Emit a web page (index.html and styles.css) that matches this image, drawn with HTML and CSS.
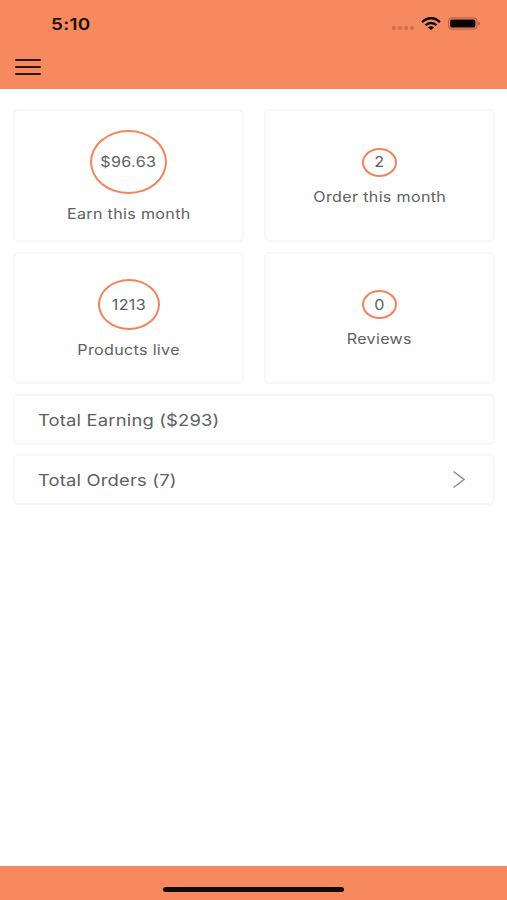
FILE: index.html
```html
<!DOCTYPE html>
<html lang="en">
<head>
<meta charset="utf-8">
<title>Dashboard</title>
<link rel="stylesheet" href="styles.css">
</head>
<body>
<div class="app">
  <header class="header">
    <div class="status">
      <span class="time wide">5:10</span>
      <div class="indicators">
        <span class="signal"><i></i><i></i><i></i><i></i></span>
        <svg class="wifi" width="20" height="14" viewBox="0 0 20 14" fill="none" stroke="#080402" stroke-width="2.3">
          <path d="M1.1 5.2C6-.1 14-.1 18.9 5.2M4.5 8.3c3.1-3.1 7.900-3.100 11 0"/>
          <path d="M10 13 6.900 10.400c1.700-1.600 4.500-1.600 6.200 0z" fill="#080402" stroke="none"/>
        </svg>
        <svg class="battery" width="33" height="13" viewBox="0 0 33 13">
          <rect x=".6" y=".9" width="28.400" height="11.200" rx="3" fill="none" stroke="#a95f42"/>
          <rect x="2.200" y="2.500" width="25.200" height="8" rx="1.500" fill="#080402"/>
          <path d="M30.500 4.500c1.500.5 1.500 3.500 0 4z" fill="#8b4b33"/>
        </svg>
      </div>
    </div>
    <button class="menu" aria-label="Menu"><i></i><i></i><i></i></button>
  </header>
  <main class="content">
    <section class="cards">
      <article class="card">
        <div class="ring ring-large"><span class="wide">$96.63</span></div>
        <span class="wide">Earn this month</span>
      </article>
      <article class="card">
        <div class="ring ring-small"><span class="wide">2</span></div>
        <span class="wide">Order this month</span>
      </article>
      <article class="card">
        <div class="ring ring-medium"><span class="wide">1213</span></div>
        <span class="wide">Products live</span>
      </article>
      <article class="card">
        <div class="ring ring-small"><span class="wide">0</span></div>
        <span class="wide">Reviews</span>
      </article>
    </section>
    <div class="row"><span class="wide row-label">Total Earning ($293)</span></div>
    <div class="row">
      <span class="wide row-label">Total Orders (7)</span>
      <svg width="14" height="19" viewBox="0 0 14 19" fill="none" stroke="#8c8c8c" stroke-width="1.500"><path d="M1.500 1.500 12 9.500 1.500 17.500"/></svg>
    </div>
  </main>
  <footer class="footer"><div class="home"></div></footer>
</div>
</body>
</html>
```
FILE: styles.css
```css
* { box-sizing: border-box; }
body {
  margin: 0;
  background: #fff;
  color: #606060;
  font: 14px/20px Inter, "Liberation Sans", sans-serif;
}
.app { height: 900px; display: flex; flex-direction: column; }
.wide { display: inline-block; white-space: nowrap; letter-spacing: .28px; transform: scaleX(1.15); }

.header { height: 89px; background: #f7895e; }
.status {
  height: 47px;
  padding: 0 26px 0 51px;
  display: flex;
  justify-content: space-between;
  align-items: center;
}
.time { color: #1c0d07; font-size: 16px; font-weight: 600; transform-origin: left; transform: scaleX(1.18); }
.indicators { display: flex; align-items: center; }
.signal { display: flex; gap: 2px; margin: 8px 7px 0 0; }
.signal i { width: 4px; height: 4px; border-radius: 50%; background: #c96e4c; }
.wifi { margin-right: 7px; }
.menu {
  display: flex;
  flex-direction: column;
  gap: 5px;
  margin: 12px 0 0 15px;
  padding: 0;
  border: 0;
  background: none;
}
.menu i { width: 26px; height: 2px; border-radius: 1px; background: #30170e; }

.content { flex: 1; padding: 20px 12px 0 13px; }
.cards { display: grid; grid-template-columns: 231px 231px; justify-content: space-between; gap: 10px; }
.card, .row { border: 2px solid #f7f7f7; border-radius: 5px; background: #fefefe; }
.card {
  height: 132.500px;
  padding-top: 4px;
  display: flex;
  flex-direction: column;
  align-items: center;
  justify-content: center;
  gap: 10px;
}
.ring {
  display: flex;
  align-items: center;
  justify-content: center;
  border: 2px solid #f2845c;
  border-radius: 50%;
}
.ring-large { width: 77px; height: 64px; }
.ring-medium { width: 62px; height: 51px; }
.ring-small { width: 35px; height: 29px; }
.row {
  height: 51px;
  margin-top: 9px;
  padding: 0 27px 0 23px;
  display: flex;
  align-items: center;
  justify-content: space-between;
  font-size: 16px;
}
.cards + .row { margin-top: 10px; }
.row-label { letter-spacing: .15px; transform-origin: left; }

.footer { height: 34px; padding-top: 21px; background: #f7895e; }
.home { width: 181px; height: 5px; margin: 0 auto; border-radius: 3px; background: #120a06; }
```
